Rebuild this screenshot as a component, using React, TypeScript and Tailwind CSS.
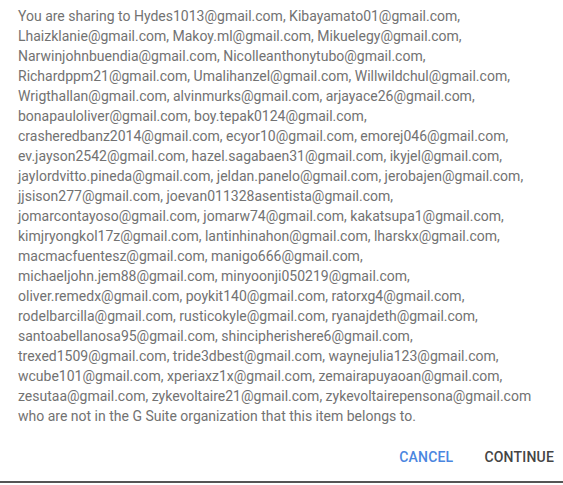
const lines = [
  "You are sharing to Hydes1013@gmail.com, Kibayamato01@gmail.com,",
  "Lhaizklanie@gmail.com, Makoy.ml@gmail.com, Mikuelegy@gmail.com,",
  "Narwinjohnbuendia@gmail.com, Nicolleanthonytubo@gmail.com,",
  "Richardppm21@gmail.com, Umalihanzel@gmail.com, Willwildchul@gmail.com,",
  "Wrigthallan@gmail.com, alvinmurks@gmail.com, arjayace26@gmail.com,",
  "bonapauloliver@gmail.com, boy.tepak0124@gmail.com,",
  "crasheredbanz2014@gmail.com, ecyor10@gmail.com, emorej046@gmail.com,",
  "ev.jayson2542@gmail.com, hazel.sagabaen31@gmail.com, ikyjel@gmail.com,",
  "jaylordvitto.pineda@gmail.com, jeldan.panelo@gmail.com, jerobajen@gmail.com,",
  "jjsison277@gmail.com, joevan011328asentista@gmail.com,",
  "jomarcontayoso@gmail.com, jomarw74@gmail.com, kakatsupa1@gmail.com,",
  "kimjryongkol17z@gmail.com, lantinhinahon@gmail.com, lharskx@gmail.com,",
  "macmacfuentesz@gmail.com, manigo666@gmail.com,",
  "michaeljohn.jem88@gmail.com, minyoonji050219@gmail.com,",
  "oliver.remedx@gmail.com, poykit140@gmail.com, ratorxg4@gmail.com,",
  "rodelbarcilla@gmail.com, rusticokyle@gmail.com, ryanajdeth@gmail.com,",
  "santoabellanosa95@gmail.com, shincipherishere6@gmail.com,",
  "trexed1509@gmail.com, tride3dbest@gmail.com, waynejulia123@gmail.com,",
  "wcube101@gmail.com, xperiaxz1x@gmail.com, zemairapuyaoan@gmail.com,",
  "zesutaa@gmail.com, zykevoltaire21@gmail.com, zykevoltairepensona@gmail.com",
  "who are not in the G Suite organization that this item belongs to.",
];

export default function App() {
  return (
    <div className="w-[563px] h-[485px] bg-white flex flex-col font-['Roboto',sans-serif] overflow-hidden">
      <div className="pl-[18px] pt-[6px] text-[14px] leading-[20px] text-[#727272]">
        {lines.map((l, i) => (
          <div key={i} className="whitespace-nowrap">{l}</div>
        ))}
      </div>
      <div className="flex justify-end items-center gap-[31px] pr-[9px] mt-[21px] text-[14px] font-medium tracking-[0.2px]">
        <button className="text-[#4a86e0]">CANCEL</button>
        <button className="text-[#444444]">CONTINUE</button>
      </div>
      <div className="mt-auto mb-[2px] h-[2px] bg-[#555555]" />
    </div>
  );
}
